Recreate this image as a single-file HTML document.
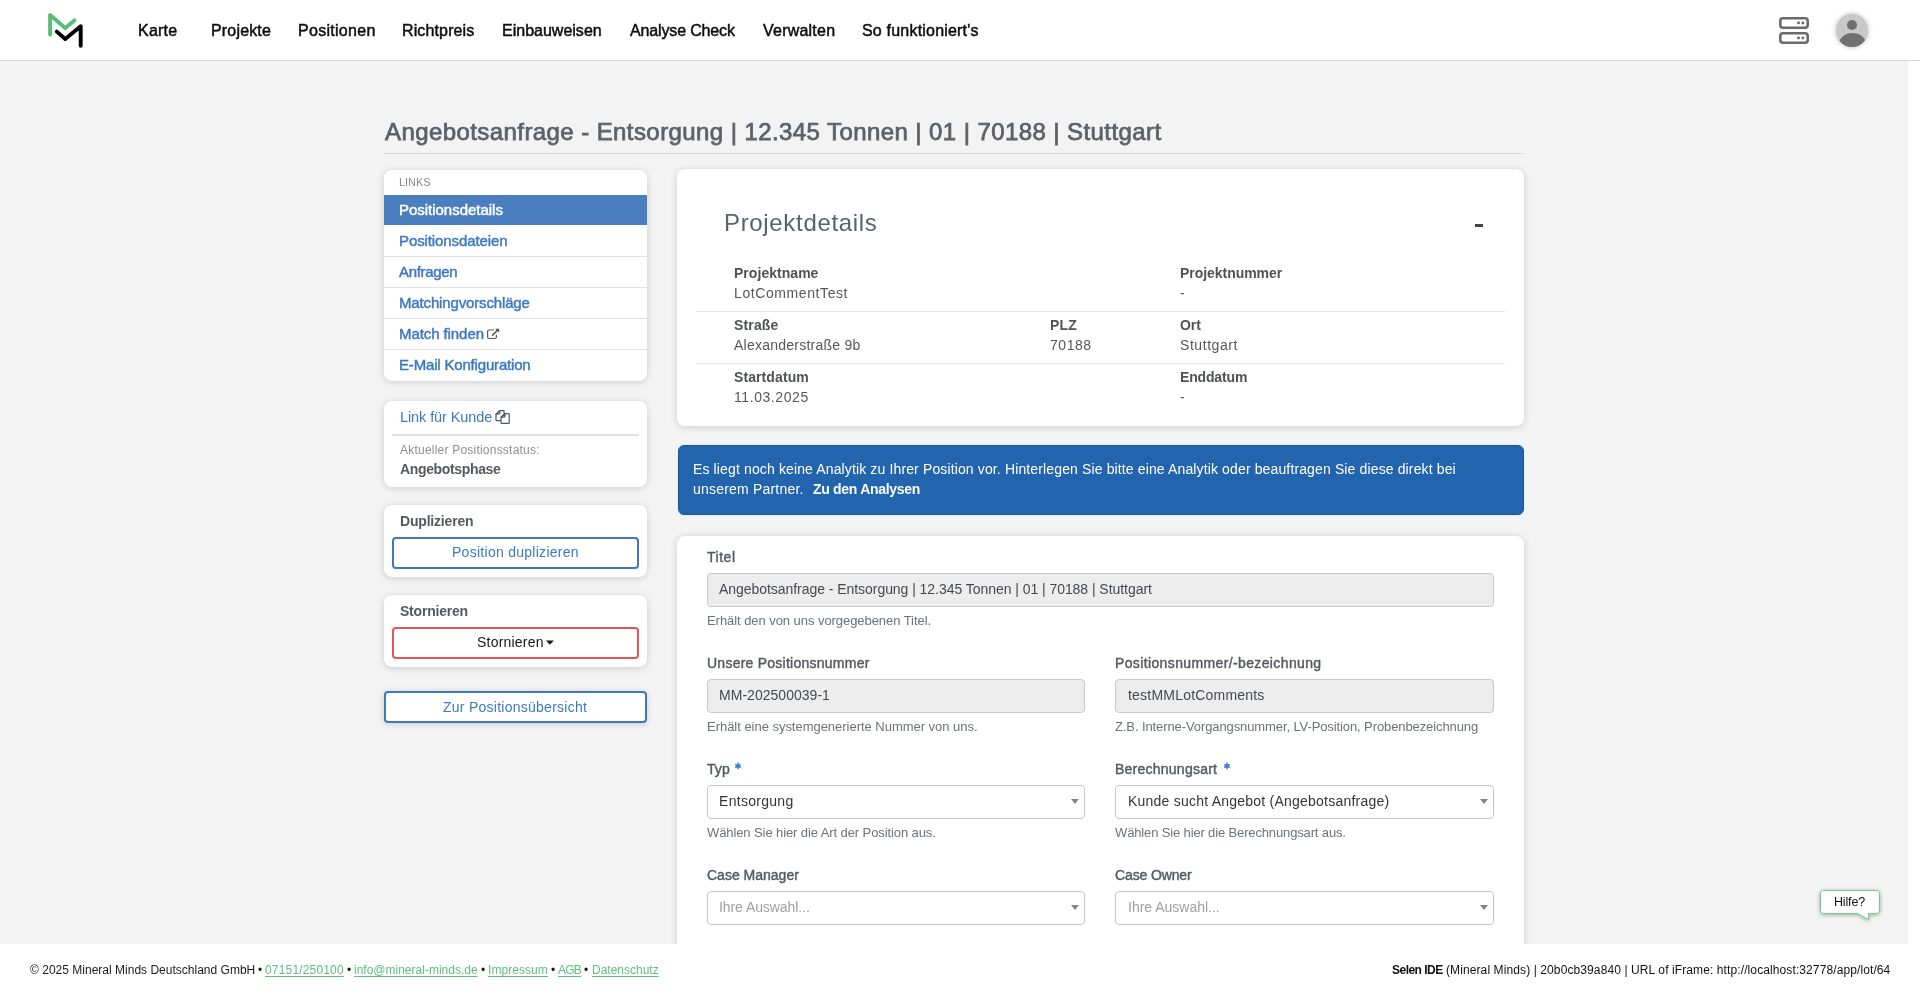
<!DOCTYPE html>
<html lang="de">
<head>
<meta charset="utf-8">
<title>Mineral Minds – Positionsdetails</title>
<style>
*{box-sizing:border-box;margin:0;padding:0}
html,body{width:1920px;height:994px;overflow:hidden;background:#fff;font-family:"Liberation Sans",sans-serif}
.a{position:absolute}
.t{position:absolute;white-space:nowrap;line-height:1;font-family:"Liberation Sans",sans-serif;z-index:5;will-change:transform}
.card{position:absolute;background:#fff;border-radius:8px;box-shadow:0 1px 7px rgba(0,0,0,.16)}
.sep{position:absolute;height:1px;background:#e2e2e2}
.inp{position:absolute;border:1px solid #c9c9c9;border-radius:4px;background:#ededed}
.sel{position:absolute;border:1px solid #c9c9c9;border-radius:4px;background:#fff}
.arr{position:absolute;width:0;height:0;border-left:4px solid transparent;border-right:4px solid transparent;border-top:5px solid #858585}
.btn{position:absolute;border:2px solid #3f78c0;border-radius:4px;background:#fff}
</style>
</head>
<body>
<!-- iframe content area -->
<div class="a" style="left:0;top:0;width:1908px;height:944px;background:#f3f3f3;overflow:hidden">

  <!-- top navigation bar -->
  <div class="a" style="left:0;top:0;width:1908px;height:61px;background:#fff;border-bottom:1px solid #d6d6d6"></div>
  <svg class="a" style="left:40px;top:6px" width="50" height="48" viewBox="40 6 50 48">
    <polyline points="50.1,34.5 50.1,15.0 65.2,27.9 74.4,20.4" fill="none" stroke="#57bd78" stroke-width="3.9" stroke-linecap="round" stroke-linejoin="round"/>
    <polyline points="56.8,31.6 65.2,39.0 80.7,26.2 80.7,45.8" fill="none" stroke="#000" stroke-width="3.9" stroke-linecap="round" stroke-linejoin="round"/>
  </svg>
  <svg class="a" style="left:1774px;top:12px" width="40" height="38" viewBox="1774 12 40 38">
    <rect x="1780.3" y="18.3" width="27.4" height="9.4" rx="2.6" fill="none" stroke="#6b6b6b" stroke-width="2.6"/>
    <rect x="1780.3" y="33.3" width="27.4" height="9.4" rx="2.6" fill="none" stroke="#6b6b6b" stroke-width="2.6"/>
    <rect x="1797.2" y="21.6" width="2.6" height="2.6" fill="#6b6b6b"/><rect x="1801.6" y="21.6" width="2.6" height="2.6" fill="#6b6b6b"/>
    <rect x="1797.2" y="36.6" width="2.6" height="2.6" fill="#6b6b6b"/><rect x="1801.6" y="36.6" width="2.6" height="2.6" fill="#6b6b6b"/>
  </svg>
  <div class="a" style="left:1836px;top:14px;width:32px;height:33px;border-radius:50%;background:#c9c9c9;box-shadow:0 0 5px rgba(0,0,0,.28);overflow:hidden">
    <div class="a" style="left:11px;top:6px;width:10px;height:10px;border-radius:50%;background:#707070"></div>
    <div class="a" style="left:2.5px;top:19px;width:27px;height:22px;border-radius:50%;background:#707070"></div>
  </div>

  <!-- page title rule -->
  <div class="sep" style="left:384px;top:153px;width:1140px;background:#dadada"></div>

  <!-- left: links card -->
  <div class="card" style="left:384px;top:170px;width:263px;height:211px;overflow:hidden">
    <div class="a" style="left:0;top:25px;width:263px;height:30px;background:#4a7ebf"></div>
    <div class="sep" style="left:0;top:86px;width:263px"></div>
    <div class="sep" style="left:0;top:117px;width:263px"></div>
    <div class="sep" style="left:0;top:148px;width:263px"></div>
    <div class="sep" style="left:0;top:179px;width:263px"></div>
  </div>
  <!-- external link icon -->
  <svg class="a" style="left:485px;top:326px" width="16" height="15" viewBox="485 326 16 15">
    <path d="M493.8,330 H489.1 Q487.6,330 487.6,331.5 V337 Q487.6,338.5 489.1,338.5 H494.9 Q496.4,338.5 496.4,337 V335.1" fill="none" stroke="#53585d" stroke-width="1.2"/>
    <path d="M492.5,335.2 L497.4,330.3" fill="none" stroke="#4f5459" stroke-width="1.5" stroke-linecap="round"/>
    <path d="M495.1,328.8 H499.1 V332.8 Z" fill="#4f5459"/>
  </svg>

  <!-- left: link for customer / status -->
  <div class="card" style="left:384px;top:401px;width:263px;height:86px">
    <div class="a" style="left:8px;top:33px;width:247px;height:2px;background:#e1e1e1"></div>
  </div>
  <svg class="a" style="left:494px;top:409px" width="17" height="16" viewBox="494 409 17 16">
    <path d="M504.1,413.4 V411.2 Q504.1,410.7 503.6,410.7 H499.6 L496,414.2 V420 Q496,420.5 496.5,420.5 H500.7" fill="none" stroke="#53585d" stroke-width="1.25"/>
    <path d="M499.7,410.9 L499.9,412.9 Q499.9,413.9 498.9,413.9 L496.1,414.1 Z" fill="#fff" stroke="#53585d" stroke-width="1.15" stroke-linejoin="round"/>
    <path d="M501,417.3 L504.8,413.7 H508.7 Q509.2,413.7 509.2,414.2 V422.8 Q509.2,423.3 508.7,423.3 H501.5 Q501,423.3 501,422.8 Z" fill="#fff" stroke="#53585d" stroke-width="1.25"/>
    <path d="M504.9,413.9 L505.1,416.1 Q505.1,417.1 504.1,417.1 L501.2,417.3 Z" fill="#fff" stroke="#53585d" stroke-width="1.15" stroke-linejoin="round"/>
  </svg>

  <!-- left: duplicate -->
  <div class="card" style="left:384px;top:505px;width:263px;height:72px">
    <div class="btn" style="left:8px;top:32px;width:247px;height:32px"></div>
  </div>
  <!-- left: cancel -->
  <div class="card" style="left:384px;top:595px;width:263px;height:72px">
    <div class="btn" style="left:8px;top:32px;width:247px;height:32px;border-color:#e55556"></div>
    <svg class="a" style="left:161px;top:45px" width="10" height="6" viewBox="0 0 10 6"><path d="M0.9,0.6 H8.9 L4.9,4.8 Z" fill="#151515"/></svg>
  </div>
  <!-- overview button -->
  <div class="btn" style="left:384px;top:691px;width:263px;height:32px;box-shadow:0 1px 6px rgba(0,0,0,.17)"></div>

  <!-- right: project details -->
  <div class="card" style="left:677px;top:169px;width:847px;height:257px">
    <div class="a" style="left:798px;top:55px;width:8.3px;height:2.8px;background:#444"></div>
    <div class="sep" style="left:19px;top:142px;width:809px;background:#e6e6e6"></div>
    <div class="sep" style="left:19px;top:194px;width:809px;background:#e6e6e6"></div>
  </div>

  <!-- analytics alert -->
  <div class="a" style="left:677.5px;top:444.6px;width:846px;height:70.2px;background:#2264ae;border:1px solid #1a56a0;border-radius:6px;box-shadow:0 0 0 0.6px #d8f3f8"></div>

  <!-- form card -->
  <div class="card" style="left:677px;top:536px;width:847px;height:430px">
    <div class="inp" style="left:30px;top:37px;width:787px;height:34px"></div>
    <div class="inp" style="left:30px;top:143px;width:378px;height:34px"></div>
    <div class="inp" style="left:438px;top:143px;width:379px;height:34px"></div>
    <svg class="a" style="left:57px;top:226px" width="8" height="8" viewBox="0 0 8 8"><path d="M4,0.6 V7.2 M1.2,2.3 L6.8,5.5 M6.8,2.3 L1.2,5.5" stroke="#3d79c1" stroke-width="1.5"/></svg>
    <div class="sel" style="left:30px;top:249px;width:378px;height:34px"></div>
    <div class="arr" style="left:394px;top:263px"></div>
    <svg class="a" style="left:545.5px;top:226px" width="8" height="8" viewBox="0 0 8 8"><path d="M4,0.6 V7.2 M1.2,2.3 L6.8,5.5 M6.8,2.3 L1.2,5.5" stroke="#3d79c1" stroke-width="1.5"/></svg>
    <div class="sel" style="left:438px;top:249px;width:379px;height:34px"></div>
    <div class="arr" style="left:803px;top:262.5px"></div>
    <div class="sel" style="left:30px;top:355px;width:378px;height:34px"></div>
    <div class="arr" style="left:394px;top:369px"></div>
    <div class="sel" style="left:438px;top:355px;width:379px;height:34px"></div>
    <div class="arr" style="left:803px;top:369px"></div>
  </div>

  <!-- help bubble -->
  <svg class="a" style="left:1812px;top:882px;overflow:visible" width="76" height="46" viewBox="1812 882 76 46">
    <defs><filter id="sh" x="-30%" y="-60%" width="160%" height="220%"><feGaussianBlur in="SourceAlpha" stdDeviation="2.2"/><feOffset dy="1"/><feComponentTransfer><feFuncA type="linear" slope="0.35"/></feComponentTransfer><feMerge><feMergeNode/><feMergeNode in="SourceGraphic"/></feMerge></filter></defs>
    <path filter="url(#sh)" d="M1823.3,890.5 H1876.7 Q1879.5,890.5 1879.5,893.3 V910.6 Q1879.5,913.4 1876.7,913.4 H1868.6 V919.6 L1857.6,913.4 H1823.3 Q1820.5,913.4 1820.5,910.6 V893.3 Q1820.5,890.5 1823.3,890.5 Z" fill="#fff" stroke="#6fca8c" stroke-width="1"/>
  </svg>
</div>
<!-- white strip right of iframe -->
<div class="a" style="left:1908px;top:0;width:12px;height:61px;background:#fff;border-bottom:1px solid #d6d6d6"></div>

<span class="t" id="t0" style="left:137.86px;top:23.06px;font-size:16px;color:#0d0d0d;-webkit-text-stroke:0.48px #0d0d0d;letter-spacing:0.237px;">Karte</span>
<span class="t" id="t1" style="left:210.66px;top:23.06px;font-size:16px;color:#0d0d0d;-webkit-text-stroke:0.48px #0d0d0d;letter-spacing:0.168px;">Projekte</span>
<span class="t" id="t2" style="left:298.06px;top:23.06px;font-size:16px;color:#0d0d0d;-webkit-text-stroke:0.48px #0d0d0d;letter-spacing:0.286px;">Positionen</span>
<span class="t" id="t3" style="left:402.06px;top:23.06px;font-size:16px;color:#0d0d0d;-webkit-text-stroke:0.48px #0d0d0d;letter-spacing:0.130px;">Richtpreis</span>
<span class="t" id="t4" style="left:502.26px;top:23.06px;font-size:16px;color:#0d0d0d;-webkit-text-stroke:0.48px #0d0d0d;letter-spacing:0.005px;">Einbauweisen</span>
<span class="t" id="t5" style="left:629.70px;top:23.06px;font-size:16px;color:#0d0d0d;-webkit-text-stroke:0.48px #0d0d0d;letter-spacing:-0.147px;">Analyse Check</span>
<span class="t" id="t6" style="left:763.28px;top:23.06px;font-size:16px;color:#0d0d0d;-webkit-text-stroke:0.48px #0d0d0d;letter-spacing:0.223px;">Verwalten</span>
<span class="t" id="t7" style="left:861.93px;top:23.06px;font-size:16px;color:#0d0d0d;-webkit-text-stroke:0.48px #0d0d0d;letter-spacing:0.199px;">So funktioniert's</span>
<span class="t" id="t8" style="left:384.61px;top:119.70px;font-size:24px;color:#5b6269;-webkit-text-stroke:0.75px #5b6269;letter-spacing:0.418px;">Angebotsanfrage - Entsorgung | 12.345 Tonnen | 01 | 70188 | Stuttgart</span>
<span class="t" id="t9" style="left:399.32px;top:177.29px;font-size:11px;color:#8a8a8a;letter-spacing:-0.063px;">LINKS</span>
<span class="t" id="t10" style="left:399.32px;top:201.51px;font-size:15px;color:#ffffff;-webkit-text-stroke:0.45px #ffffff;letter-spacing:-0.023px;">Positionsdetails</span>
<span class="t" id="t11" style="left:399.32px;top:232.51px;font-size:15px;color:#3d79c1;-webkit-text-stroke:0.45px #3d79c1;letter-spacing:-0.105px;">Positionsdateien</span>
<span class="t" id="t12" style="left:399.32px;top:263.51px;font-size:15px;color:#3d79c1;-webkit-text-stroke:0.45px #3d79c1;letter-spacing:-0.311px;">Anfragen</span>
<span class="t" id="t13" style="left:399.32px;top:294.51px;font-size:15px;color:#3d79c1;-webkit-text-stroke:0.45px #3d79c1;letter-spacing:-0.150px;">Matchingvorschläge</span>
<span class="t" id="t14" style="left:399.32px;top:325.51px;font-size:15px;color:#3d79c1;-webkit-text-stroke:0.45px #3d79c1;letter-spacing:-0.082px;">Match finden</span>
<span class="t" id="t15" style="left:399.32px;top:356.51px;font-size:15px;color:#3d79c1;-webkit-text-stroke:0.45px #3d79c1;letter-spacing:-0.177px;">E-Mail Konfiguration</span>
<span class="t" id="t16" style="left:399.69px;top:409.53px;font-size:14.5px;color:#3d79c1;letter-spacing:-0.089px;">Link für Kunde</span>
<span class="t" id="t17" style="left:399.69px;top:444.35px;font-size:12px;color:#8f8f8f;letter-spacing:0.219px;">Aktueller Positionsstatus:</span>
<span class="t" id="t18" style="left:399.69px;top:462.16px;font-size:14px;color:#555a5f;font-weight:bold;letter-spacing:-0.353px;">Angebotsphase</span>
<span class="t" id="t19" style="left:399.69px;top:514.16px;font-size:14px;color:#555a5f;font-weight:bold;letter-spacing:-0.191px;">Duplizieren</span>
<span class="t" id="t20" style="left:452.26px;top:545.16px;font-size:14px;color:#3d79c1;letter-spacing:0.274px;">Position duplizieren</span>
<span class="t" id="t21" style="left:399.69px;top:604.16px;font-size:14px;color:#555a5f;font-weight:bold;letter-spacing:-0.214px;">Stornieren</span>
<span class="t" id="t22" style="left:476.93px;top:635.16px;font-size:14px;color:#151515;letter-spacing:0.211px;">Stornieren</span>
<span class="t" id="t23" style="left:443.19px;top:700.16px;font-size:14px;color:#3d79c1;letter-spacing:0.256px;">Zur Positionsübersicht</span>
<span class="t" id="t24" style="left:724.40px;top:211.30px;font-size:24px;color:#5b6269;letter-spacing:0.669px;">Projektdetails</span>
<span class="t" id="t25" style="left:733.93px;top:265.96px;font-size:14px;color:#505254;font-weight:bold;letter-spacing:0.037px;">Projektname</span>
<span class="t" id="t26" style="left:733.93px;top:285.56px;font-size:14px;color:#555759;letter-spacing:0.590px;">LotCommentTest</span>
<span class="t" id="t27" style="left:1179.85px;top:265.96px;font-size:14px;color:#505254;font-weight:bold;letter-spacing:-0.039px;">Projektnummer</span>
<span class="t" id="t28" style="left:1179.85px;top:285.56px;font-size:14px;color:#555759;">-</span>
<span class="t" id="t29" style="left:733.93px;top:317.76px;font-size:14px;color:#505254;font-weight:bold;letter-spacing:0.150px;">Straße</span>
<span class="t" id="t30" style="left:733.93px;top:337.56px;font-size:14px;color:#555759;letter-spacing:0.244px;">Alexanderstraße 9b</span>
<span class="t" id="t31" style="left:1049.75px;top:317.76px;font-size:14px;color:#505254;font-weight:bold;letter-spacing:0.126px;">PLZ</span>
<span class="t" id="t32" style="left:1049.75px;top:337.56px;font-size:14px;color:#555759;letter-spacing:0.544px;">70188</span>
<span class="t" id="t33" style="left:1179.85px;top:317.76px;font-size:14px;color:#505254;font-weight:bold;letter-spacing:-0.034px;">Ort</span>
<span class="t" id="t34" style="left:1179.85px;top:337.56px;font-size:14px;color:#555759;letter-spacing:0.563px;">Stuttgart</span>
<span class="t" id="t35" style="left:733.93px;top:369.96px;font-size:14px;color:#505254;font-weight:bold;letter-spacing:0.093px;">Startdatum</span>
<span class="t" id="t36" style="left:733.93px;top:389.56px;font-size:14px;color:#555759;letter-spacing:0.571px;">11.03.2025</span>
<span class="t" id="t37" style="left:1179.85px;top:369.96px;font-size:14px;color:#505254;font-weight:bold;letter-spacing:-0.158px;">Enddatum</span>
<span class="t" id="t38" style="left:1179.85px;top:389.56px;font-size:14px;color:#555759;">-</span>
<span class="t" id="t39" style="left:693.00px;top:461.76px;font-size:14px;color:#ffffff;letter-spacing:0.132px;">Es liegt noch keine Analytik zu Ihrer Position vor. Hinterlegen Sie bitte eine Analytik oder beauftragen Sie diese direkt bei</span>
<span class="t" id="t40" style="left:693.00px;top:481.96px;font-size:14px;color:#ffffff;letter-spacing:0.201px;">unserem Partner.</span>
<span class="t" id="t41" style="left:813.03px;top:481.66px;font-size:14px;color:#ffffff;font-weight:bold;letter-spacing:-0.293px;">Zu den Analysen</span>
<span class="t" id="t42" style="left:706.98px;top:549.56px;font-size:14px;color:#555a5f;-webkit-text-stroke:0.42px #555a5f;letter-spacing:0.529px;">Titel</span>
<span class="t" id="t43" style="left:719.25px;top:581.66px;font-size:14px;color:#464a4e;letter-spacing:-0.048px;">Angebotsanfrage - Entsorgung | 12.345 Tonnen | 01 | 70188 | Stuttgart</span>
<span class="t" id="t44" style="left:706.98px;top:614.00px;font-size:13px;color:#6d7378;letter-spacing:-0.057px;">Erhält den von uns vorgegebenen Titel.</span>
<span class="t" id="t45" style="left:706.98px;top:655.96px;font-size:14px;color:#555a5f;-webkit-text-stroke:0.42px #555a5f;letter-spacing:0.246px;">Unsere Positionsnummer</span>
<span class="t" id="t46" style="left:719.25px;top:687.76px;font-size:14px;color:#464a4e;letter-spacing:0.027px;">MM-202500039-1</span>
<span class="t" id="t47" style="left:706.98px;top:720.00px;font-size:13px;color:#6d7378;letter-spacing:-0.026px;">Erhält eine systemgenerierte Nummer von uns.</span>
<span class="t" id="t48" style="left:1115.38px;top:655.96px;font-size:14px;color:#555a5f;-webkit-text-stroke:0.42px #555a5f;letter-spacing:0.372px;">Positionsnummer/-bezeichnung</span>
<span class="t" id="t49" style="left:1127.60px;top:687.76px;font-size:14px;color:#464a4e;letter-spacing:0.208px;">testMMLotComments</span>
<span class="t" id="t50" style="left:1115.38px;top:720.00px;font-size:13px;color:#6d7378;letter-spacing:-0.102px;">Z.B. Interne-Vorgangsnummer, LV-Position, Probenbezeichnung</span>
<span class="t" id="t51" style="left:706.98px;top:762.16px;font-size:14px;color:#555a5f;-webkit-text-stroke:0.42px #555a5f;letter-spacing:0.073px;">Typ</span>
<span class="t" id="t52" style="left:719.25px;top:793.96px;font-size:14px;color:#333638;letter-spacing:0.290px;">Entsorgung</span>
<span class="t" id="t53" style="left:706.98px;top:826.40px;font-size:13px;color:#6d7378;letter-spacing:-0.095px;">Wählen Sie hier die Art der Position aus.</span>
<span class="t" id="t54" style="left:1115.38px;top:762.16px;font-size:14px;color:#555a5f;-webkit-text-stroke:0.42px #555a5f;letter-spacing:0.241px;">Berechnungsart</span>
<span class="t" id="t55" style="left:1127.60px;top:793.96px;font-size:14px;color:#333638;letter-spacing:0.229px;">Kunde sucht Angebot (Angebotsanfrage)</span>
<span class="t" id="t56" style="left:1115.38px;top:826.40px;font-size:13px;color:#6d7378;letter-spacing:-0.141px;">Wählen Sie hier die Berechnungsart aus.</span>
<span class="t" id="t57" style="left:706.98px;top:867.76px;font-size:14px;color:#555a5f;-webkit-text-stroke:0.42px #555a5f;letter-spacing:0.002px;">Case Manager</span>
<span class="t" id="t58" style="left:719.25px;top:900.36px;font-size:14px;color:#a0a0a0;letter-spacing:-0.073px;">Ihre Auswahl...</span>
<span class="t" id="t59" style="left:1115.38px;top:867.76px;font-size:14px;color:#555a5f;-webkit-text-stroke:0.42px #555a5f;letter-spacing:-0.135px;">Case Owner</span>
<span class="t" id="t60" style="left:1127.60px;top:900.36px;font-size:14px;color:#a0a0a0;letter-spacing:-0.011px;">Ihre Auswahl...</span>
<span class="t" id="t61" style="left:1834.16px;top:896.42px;font-size:12.5px;color:#111;letter-spacing:-0.162px;">Hilfe?</span>
<span class="t" id="t62" style="left:30.35px;top:964.25px;font-size:12px;color:#1a1a1a;letter-spacing:0.009px;">© 2025 Mineral Minds Deutschland GmbH</span>
<span class="t" id="t63" style="left:258.08px;top:964.25px;font-size:12px;color:#1a1a1a;">•</span>
<span class="t" id="t64" style="left:265.40px;top:964.25px;font-size:12px;color:#5cbf7d;letter-spacing:0.170px;text-decoration:underline;text-underline-offset:2px;">07151/250100</span>
<span class="t" id="t65" style="left:346.68px;top:964.25px;font-size:12px;color:#1a1a1a;">•</span>
<span class="t" id="t66" style="left:354.20px;top:964.25px;font-size:12px;color:#5cbf7d;letter-spacing:0.001px;text-decoration:underline;text-underline-offset:2px;">info@mineral-minds.de</span>
<span class="t" id="t67" style="left:481.28px;top:964.25px;font-size:12px;color:#1a1a1a;">•</span>
<span class="t" id="t68" style="left:488.19px;top:964.25px;font-size:12px;color:#5cbf7d;letter-spacing:0.052px;text-decoration:underline;text-underline-offset:2px;">Impressum</span>
<span class="t" id="t69" style="left:551.28px;top:964.25px;font-size:12px;color:#1a1a1a;">•</span>
<span class="t" id="t70" style="left:558.00px;top:964.25px;font-size:12px;color:#5cbf7d;letter-spacing:-0.775px;text-decoration:underline;text-underline-offset:2px;">AGB</span>
<span class="t" id="t71" style="left:584.08px;top:964.25px;font-size:12px;color:#1a1a1a;">•</span>
<span class="t" id="t72" style="left:591.60px;top:964.25px;font-size:12px;color:#5cbf7d;letter-spacing:-0.001px;text-decoration:underline;text-underline-offset:2px;">Datenschutz</span>
<span class="t" id="t73" style="left:1392.49px;top:964.25px;font-size:12px;color:#111;font-weight:bold;letter-spacing:-0.516px;">Selen IDE</span>
<span class="t" id="t74" style="left:1445.81px;top:964.25px;font-size:12px;color:#111;letter-spacing:0.103px;">(Mineral Minds) | 20b0cb39a840 | URL of iFrame: http://localhost:32778/app/lot/64</span>
</body>
</html>
